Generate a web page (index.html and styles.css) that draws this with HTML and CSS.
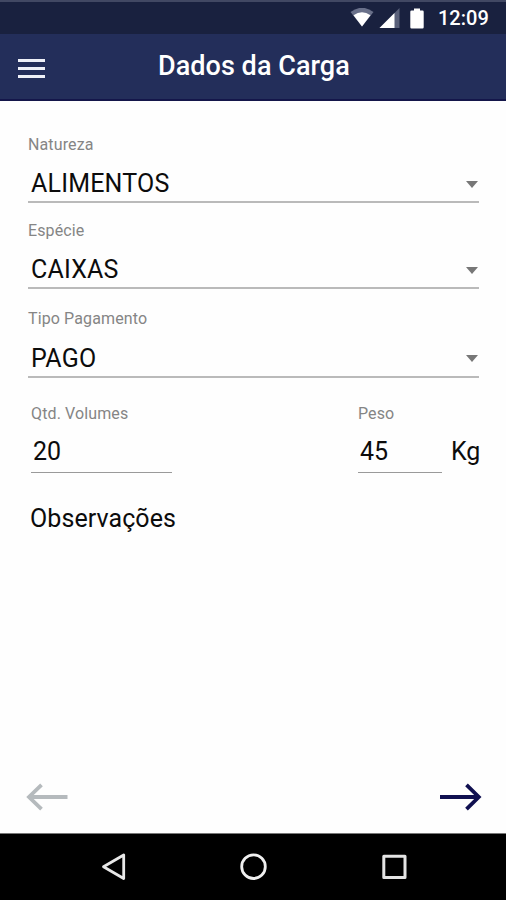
FILE: index.html
```html
<!DOCTYPE html>
<html lang="pt-BR">
<head>
  <meta charset="UTF-8">
  <meta name="viewport" content="width=device-width, initial-scale=1.0">
  <title>Dados da Carga</title>
  <link rel="stylesheet" href="styles.css">
</head>
<body>
  <div class="status-bar">
    <svg class="icon-wifi" width="24" height="20" viewBox="0 0 24 20">
      <path d="M0.5 4 Q12 -4.5 23.5 4 L12 18.5 Z" fill="#69708a"/>
      <path d="M3.5 7.2 Q12 1.5 20.5 7.2 L12 18.5 Z" fill="#fff"/>
    </svg>
    <svg class="icon-signal" width="21" height="20" viewBox="0 0 21 20">
      <path d="M20.5 0 V20 H0.5 Z" fill="#59607a"/>
      <path d="M15.5 5 V20 H0.5 Z" fill="#fff"/>
    </svg>
    <svg class="icon-battery" width="14" height="21" viewBox="0 0 14 21">
      <path d="M4 0.5 H10 V2.5 H12.5 Q13.7 2.5 13.7 3.8 V19.2 Q13.7 20.5 12.5 20.5 H1.5 Q0.3 20.5 0.3 19.2 V3.8 Q0.3 2.5 1.5 2.5 H4 Z" fill="#fff"/>
    </svg>
    <span class="clock">12:09</span>
  </div>

  <header class="app-bar">
    <button class="menu-button" aria-label="Menu">
      <span></span>
      <span></span>
      <span></span>
    </button>
    <h1 class="title">Dados da Carga</h1>
  </header>

  <main class="form">
    <div class="field natureza">
      <div class="label">Natureza</div>
      <div class="value"><span>ALIMENTOS</span><i class="caret"></i></div>
    </div>

    <div class="field especie">
      <div class="label">Espécie</div>
      <div class="value"><span>CAIXAS</span><i class="caret"></i></div>
    </div>

    <div class="field pagamento">
      <div class="label">Tipo Pagamento</div>
      <div class="value"><span>PAGO</span><i class="caret"></i></div>
    </div>

    <div class="field-row">
      <div class="small-field volumes">
        <div class="label">Qtd. Volumes</div>
        <div class="value"><span>20</span></div>
      </div>
      <div class="small-field peso">
        <div class="label">Peso</div>
        <div class="value"><span>45</span></div>
      </div>
      <div class="unit">Kg</div>
    </div>

    <div class="notes"><span>Observações</span></div>

    <div class="pager">
      <svg width="42" height="28" viewBox="0 0 42 28" fill="none" stroke="#b5babd" stroke-width="3.8">
        <path d="M41.5 14 H3 M15.5 1.8 L3 14 L15.5 26.2"/>
      </svg>
      <svg width="42" height="28" viewBox="0 0 42 28" fill="none" stroke="#101050" stroke-width="3.8">
        <path d="M0 14 H38.5 M26.5 1.8 L38.8 14 L26.5 26.2"/>
      </svg>
    </div>
  </main>

  <nav class="nav-bar">
    <svg class="nav-back" width="26" height="30" viewBox="0 0 26 30" fill="none" stroke="#e8e8e8" stroke-width="2.8" stroke-linejoin="round">
      <path d="M22.7 3 V26.5 L2.5 14.8 Z"/>
    </svg>
    <svg class="nav-home" width="28" height="28" viewBox="0 0 28 28" fill="none" stroke="#f0f0f0" stroke-width="2.8">
      <circle cx="14.5" cy="13.7" r="11.8"/>
    </svg>
    <svg class="nav-recent" width="26" height="26" viewBox="0 0 26 26" fill="none" stroke="#e4e4e4" stroke-width="3" stroke-linejoin="round">
      <rect x="2.8" y="2.3" width="21.2" height="21.2"/>
    </svg>
  </nav>
</body>
</html>
```
FILE: styles.css
```css
* {
  box-sizing: border-box;
}

body {
  margin: 0;
  height: 900px;
  display: flex;
  flex-direction: column;
  background-color: #fefefe;
  color: #0c0c0c;
  font-family: Roboto, 'Liberation Sans', sans-serif;
}

.status-bar {
  height: 34px;
  border-top: 2px solid #414863;
  background-color: #19213f;
  color: #fff;
  display: flex;
  align-items: center;
  padding-left: 350px;
}

.icon-signal {
  margin-left: 5px;
}

.icon-battery {
  margin-left: 10px;
}

.clock {
  margin-left: 14px;
  font-size: 20px;
  font-weight: 500;
  line-height: 24px;
}

.app-bar {
  height: 67px;
  background-color: #232e5a;
  border-bottom: 2px solid #14164a;
  display: flex;
  align-items: center;
}

.menu-button {
  margin: 3px 0 0 18px;
  padding: 0;
  width: 27px;
  border: none;
  background: none;
  display: flex;
  flex-direction: column;
  gap: 5px;
}

.menu-button span {
  height: 3px;
  background-color: #eef0f8;
}

.title {
  margin: 0 0 1px 113px;
  color: #fff;
  font-size: 27px;
  font-weight: 500;
  line-height: 32px;
  letter-spacing: 0.05px;
  white-space: nowrap;
}

.form {
  flex: 1;
  display: flex;
  flex-direction: column;
  padding: 34px 27px 0 28px;
}

.label {
  height: 20px;
  color: #858585;
  font-size: 16px;
  line-height: 20px;
  letter-spacing: 0.12px;
  white-space: nowrap;
}

.value {
  display: flex;
  align-items: center;
  justify-content: space-between;
  font-size: 25px;
  line-height: 30px;
}

.field {
  height: 88px;
}

.natureza {
  height: 86px;
}

.field .value {
  height: 48px;
  padding: 12px 1px 0 3px;
  border-bottom: 2px solid #bababa;
  letter-spacing: 0.2px;
}

.pagamento .value {
  height: 49px;
}

.caret {
  border-left: 6.5px solid transparent;
  border-right: 6.5px solid transparent;
  border-top: 7px solid #777;
}

.field-row {
  display: flex;
  margin-top: 7px;
}

.small-field {
  flex-shrink: 0;
}

.small-field .value {
  height: 49px;
  padding: 7px 0 0 2px;
  border-bottom: 1px solid #9a9a9a;
}

.volumes {
  width: 141px;
  margin-left: 3px;
}

.peso {
  width: 84px;
  margin-left: 186px;
}

.unit {
  margin: 33px 0 0 9px;
  font-size: 25px;
  line-height: 30px;
}

.notes {
  margin: 31px 0 0 2px;
  font-size: 25px;
  line-height: 30px;
  letter-spacing: 0.08px;
}

.pager {
  display: flex;
  justify-content: space-between;
  margin: auto -3px 22px -2px;
}

.nav-bar {
  height: 67px;
  border-top: 1px solid #777;
  background-color: #000;
  display: flex;
  align-items: center;
  padding-left: 101px;
}

.nav-home {
  margin-left: 112px;
}

.nav-recent {
  margin-left: 114px;
}
```
